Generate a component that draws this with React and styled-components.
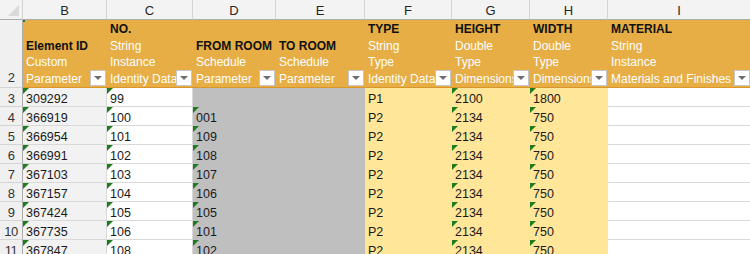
import styled, { createGlobalStyle } from "styled-components";

const GlobalStyle = createGlobalStyle`
  html, body { margin: 0; padding: 0; background: #ffffff; }
  body { font-family: "Liberation Sans", Arial, sans-serif; }
`;

// ── Data ──────────────────────────────────────────────────

const columns = [
  { key: "B", width: 84 },
  { key: "C", width: 86 },
  { key: "D", width: 83 },
  { key: "E", width: 89 },
  { key: "F", width: 87 },
  { key: "G", width: 78 },
  { key: "H", width: 78 },
  { key: "I", width: 143 },
];

const headers = {
  B: ["", "Element ID", "Custom", "Parameter"],
  C: ["NO.", "String", "Instance", "Identity Data"],
  D: ["", "FROM ROOM", "Schedule", "Parameter"],
  E: ["", "TO ROOM", "Schedule", "Parameter"],
  F: ["TYPE", "String", "Type", "Identity Data"],
  G: ["HEIGHT", "Double", "Type", "Dimensions"],
  H: ["WIDTH", "Double", "Type", "Dimensions"],
  I: ["MATERIAL", "String", "Instance", "Materials and Finishes"],
};

const rows = [
  ["309292", "99", "", "P1", "2100", "1800"],
  ["366919", "100", "001", "P2", "2134", "750"],
  ["366954", "101", "109", "P2", "2134", "750"],
  ["366991", "102", "108", "P2", "2134", "750"],
  ["367103", "103", "107", "P2", "2134", "750"],
  ["367157", "104", "106", "P2", "2134", "750"],
  ["367424", "105", "105", "P2", "2134", "750"],
  ["367735", "106", "101", "P2", "2134", "750"],
  ["367847", "108", "102", "P2", "2134", "750"],
];

const fills = {
  B: "#f2f2f2",
  C: "#ffffff",
  D: "#bfbfbf",
  E: "#bfbfbf",
  F: "#ffe699",
  G: "#ffe699",
  H: "#ffe699",
  I: "#ffffff",
};

// ── Layout ────────────────────────────────────────────────

const Sheet = styled.div`
  display: grid;
  grid-template-columns: 23px ${columns.map(c => `${c.width}px`).join(" ")};
  grid-template-rows: 20px 68px repeat(9, 19px);
  width: 750px;
  height: 254px;
  overflow: hidden;
  font-size: 12px;
  color: #1a1a1a;
`;

const Corner = styled.div`
  position: relative;
  background: #f3f3f3;
  border-right: 1px solid #d4d4d4;
  border-bottom: 1px solid #ababab;

  &::after {
    content: "";
    position: absolute;
    right: 3px;
    bottom: 3px;
    border-style: solid;
    border-width: 0 0 11px 11px;
    border-color: transparent transparent #dadada transparent;
  }
`;

const ColLetter = styled.div`
  display: flex;
  align-items: center;
  justify-content: center;
  background: #f3f3f3;
  border-right: 1px solid #d4d4d4;
  border-bottom: 1px solid #ababab;
  color: #262626;
  font-size: 13px;
  padding-top: 1px;
`;

const RowNum = styled.div`
  display: flex;
  align-items: ${p => (p.$tall ? "flex-end" : "center")};
  justify-content: center;
  padding-bottom: ${p => (p.$tall ? "2px" : "0")};
  padding-top: ${p => (p.$tall ? "0" : "2px")};
  background: #f0f0f0;
  border-right: 1px solid #ababab;
  border-bottom: 1px solid #d4d4d4;
  color: #333;
  font-size: 13px;
  letter-spacing: -0.5px;
`;

// ── Header cells ──────────────────────────────────────────

const HeadCell = styled.div`
  position: relative;
  display: flex;
  flex-direction: column;
  justify-content: flex-end;
  background: #e6ae45;
  border-bottom: 1px solid #d9962a;
  padding: 0 0 0 3px;
  white-space: nowrap;
  overflow: hidden;
`;

const HeadLine = styled.div`
  height: 16.5px;
  line-height: 16.5px;
  font-size: 12px;
  font-weight: ${p => (p.$title ? 700 : 400)};
  color: ${p => (p.$title ? "#111" : "#ffffff")};
`;

const Dropdown = styled.div`
  position: absolute;
  right: 1px;
  bottom: 1px;
  width: 16px;
  height: 16px;
  background: #ffffff;
  border: 1px solid #c6c6c6;
  box-sizing: border-box;
  display: flex;
  align-items: center;
  justify-content: center;

  &::after {
    content: "";
    border-style: solid;
    border-width: 4px 4px 0 4px;
    border-color: #6e6e6e transparent transparent transparent;
  }
`;

const SelectDot = styled.div`
  position: absolute;
  left: -2px;
  top: -2px;
  width: 4px;
  height: 4px;
  background: #217346;
`;

// ── Data cells ────────────────────────────────────────────

const Cell = styled.div`
  position: relative;
  display: flex;
  align-items: center;
  padding: 3px 0 0 3px;
  background: ${p => p.$fill};
  border-right: 1px solid ${p => (p.$grid ? "#d9d9d9" : p.$fill)};
  border-bottom: 1px solid ${p => (p.$grid ? "#d9d9d9" : p.$fill)};
  font-size: 12.5px;
  white-space: nowrap;
  overflow: hidden;
`;

const Flag = styled.span`
  position: absolute;
  left: 0;
  top: 0;
  border-style: solid;
  border-width: 6px 6px 0 0;
  border-color: #1e7b1e transparent transparent transparent;
`;

// ── App ───────────────────────────────────────────────────

const flagged = ["B", "C", "D", "G", "H"];

function rowValues(r) {
  return { B: r[0], C: r[1], D: r[2], E: "", F: r[3], G: r[4], H: r[5], I: "" };
}

export default function App() {
  return (
    <>
      <GlobalStyle />
      <Sheet>
        <Corner />
        {columns.map(c => (
          <ColLetter key={c.key}>{c.key}</ColLetter>
        ))}

        <RowNum $tall>2</RowNum>
        {columns.map((c, i) => (
          <HeadCell key={c.key}>
            {i === 0 && <SelectDot />}
            {headers[c.key].map((line, j) => (
              <HeadLine key={j} $title={j === 0 || (j === 1 && headers[c.key][0] === "")}>
                {line}
              </HeadLine>
            ))}
            <Dropdown />
          </HeadCell>
        ))}

        {rows.map((r, ri) => {
          const vals = rowValues(r);
          return [
            <RowNum key={`n${ri}`}>{ri + 3}</RowNum>,
            ...columns.map(c => {
              const fill = fills[c.key];
              const grid = fill === "#ffffff" || fill === "#f2f2f2";
              const v = vals[c.key];
              return (
                <Cell key={`${ri}${c.key}`} $fill={fill} $grid={grid}>
                  {v && flagged.includes(c.key) && <Flag />}
                  {v}
                </Cell>
              );
            }),
          ];
        })}
      </Sheet>
    </>
  );
}
